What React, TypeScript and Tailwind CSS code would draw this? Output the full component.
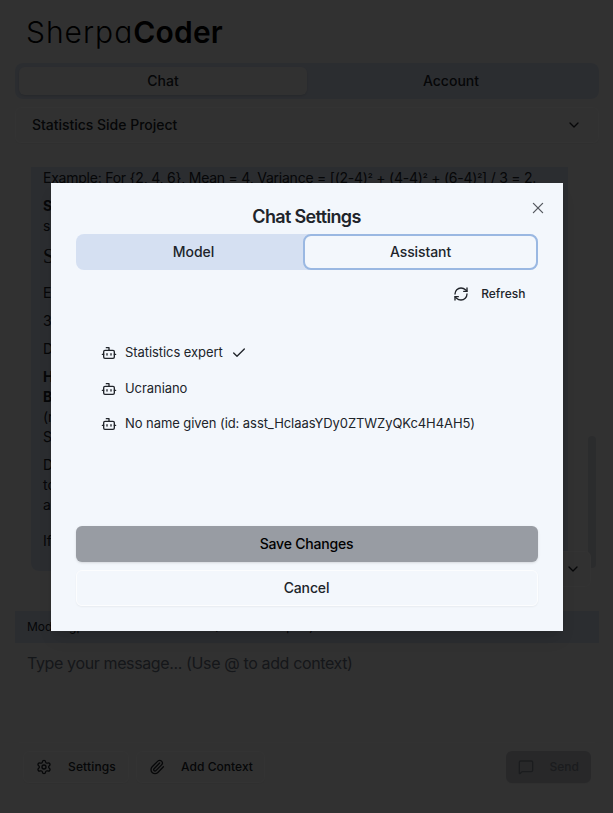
import type { ReactNode } from "react";
import { Bot, Check, ChevronDown, MessageSquare, Paperclip, RefreshCw, Settings } from "lucide-react";

const assistants = [
  { name: "Statistics expert", selected: true },
  { name: "Ucraniano", selected: false },
  { name: "No name given (id: asst_HclaasYDy0ZTWZyQKc4H4AH5)", selected: false },
];

function Logo() {
  return (
    <h1 className="ml-[11px] mt-[13px] flex h-[37px] items-center whitespace-nowrap text-[30px] leading-[37px] text-black [font-feature-settings:'cv11']">
      <span className="font-light tracking-[1px]">Sherpa</span>
      <span className="font-semibold tracking-[0.2px]">Coder</span>
    </h1>
  );
}

function Squared() {
  return <span className="text-[11.5px] leading-none">²</span>;
}

function OutlineButton({ children, className }: { children: ReactNode; className: string }) {
  return (
    <button className={"flex h-8 items-center rounded-md border border-[#fcfcfc] text-xs font-medium shadow-xs " + className}>
      {children}
    </button>
  );
}

function Page() {
  return (
    <div className="flex h-full flex-col pl-[15px] pr-[14px] pt-px">
      <Logo />
      <div className="mt-3 grid h-9 grid-cols-2 rounded-lg bg-[#d7e0f0] p-1 text-sm font-medium">
        <div className="flex items-center justify-center rounded-md bg-[#f5f5f5] text-[#20242a] shadow">Chat</div>
        <div className="flex items-center justify-center">Account</div>
      </div>
      <div className="mt-2 flex h-9 items-center justify-between rounded-md border border-[#fcfcfc] px-4 text-sm font-medium tracking-[-0.02px] shadow-xs">
        <span>Statistics Side Project</span>
        <ChevronDown size={16} />
      </div>
      <div className="relative mt-6 h-[444px]">
        <div className="ml-4 h-[404px] w-[537px] overflow-hidden rounded-b-lg bg-[#d7e0f0] px-3 text-sm leading-5">
          <p className="mt-px h-5 whitespace-nowrap tracking-[-0.23px]">
            Example: For {"{2, 4, 6}"}, Mean = 4, Variance = [(2-4)
            <Squared /> + (4-4)
            <Squared /> + (6-4)
            <Squared />] / 3 = 2.
          </p>
          <p className="mt-2 font-bold">S</p>
          <p>s</p>
          <p className="mt-2 font-['Liberation_Serif'] text-xl leading-6">S</p>
          <p className="mt-[15px]">E</p>
          <p className="mt-2">3</p>
          <p className="mt-2">D</p>
          <p className="mt-2 font-bold">H</p>
          <p className="font-bold">B</p>
          <p>(r</p>
          <p>S</p>
          <p className="mt-2">D</p>
          <p>to</p>
          <p>a</p>
          <p className="mt-4">If</p>
        </div>
        <div className="absolute right-[3px] top-[269px] h-[132px] w-2 rounded-full bg-[#d7dadf]" />
        <div className="absolute right-2 top-[384px] flex h-9 w-9 items-center justify-center rounded-md border border-[#fcfcfc] bg-[#f5f5f5]">
          <ChevronDown size={16} />
        </div>
      </div>
      <div className="flex h-8 items-center gap-[18px] bg-[#d7e0f0] px-3 text-xs">
        <span>Model: gpt-4o-mini</span>
        <span>Assistant: (Statistics expert)</span>
      </div>
      <div className="h-[99px] px-3 pt-2 text-base leading-6 tracking-[-0.37px] text-[#6b7280]">
        Type your message... (Use @ to add context)
      </div>
      <div className="mx-1 flex border-t border-[#fafafa] px-1 pt-2">
        <OutlineButton className="mr-2 gap-4 px-3 tracking-[0.15px]">
          <Settings size={16} />
          Settings
        </OutlineButton>
        <OutlineButton className="-ml-px gap-4 pl-3 pr-[11px] tracking-[0.05px]">
          <Paperclip size={16} />
          Add Context
        </OutlineButton>
        <button className="ml-auto flex h-8 items-center gap-4 rounded-md bg-[#c5c8cd] px-3 text-xs font-medium text-[#858a94] shadow-xs">
          <MessageSquare size={16} />
          Send
        </button>
      </div>
    </div>
  );
}

function SettingsDialog() {
  return (
    <div className="relative flex h-[448px] w-[512px] flex-col bg-[#f3f7fc] px-[25px] pt-[25px] shadow-lg">
      <button className="absolute right-[17px] top-[17px] text-[#55595f]" aria-label="Close">
        <svg width="16" height="16" viewBox="0 0 15 15" fill="none">
          <path d="M3.2 3.2 11.8 11.8M11.8 3.2 3.2 11.8" stroke="currentColor" strokeWidth="1.2" strokeLinecap="round" />
        </svg>
      </button>
      <h2 className="flex h-[18px] items-center justify-center text-lg font-semibold tracking-[-0.65px]">Chat Settings</h2>
      <div className="mt-2 flex h-9 rounded-lg bg-[#d5e0f2] text-sm font-medium">
        <div className="flex w-[227px] items-center justify-center pl-[9px]">Model</div>
        <div className="flex flex-1 items-center justify-center rounded-lg border-2 border-[#9ab8e2] bg-[#f3f7fc] pl-px tracking-[-0.1px]">Assistant</div>
      </div>
      <div className="mt-2 flex h-8 items-center justify-end gap-3 pr-3 text-xs font-medium">
        <RefreshCw size={16} />
        Refresh
      </div>
      <ul className="mt-[26px] h-[190px] pl-[25px] text-[13px]">
        {assistants.map((assistant) => (
          <li key={assistant.name} className="flex h-[35.5px] items-center gap-[8.5px]">
            <Bot size={16} />
            <span className="-mt-px tracking-[-0.07px]">{assistant.name}</span>
            {assistant.selected && <Check size={16} />}
          </li>
        ))}
      </ul>
      <button className="h-9 rounded-md bg-[#989ca3] text-sm font-medium tracking-[-0.2px] text-black shadow">Save Changes</button>
      <button className="mt-2 h-9 rounded-md border border-[#fcfdfe] text-sm font-medium tracking-[-0.15px] shadow-xs">Cancel</button>
    </div>
  );
}

export default function App() {
  return (
    <div className="relative h-[813px] w-[613px] overflow-hidden bg-[#f5f5f5] font-[Inter,sans-serif] text-[#20242a]">
      <Page />
      <div className="absolute inset-0 flex items-center justify-center bg-black/80">
        <SettingsDialog />
      </div>
    </div>
  );
}
